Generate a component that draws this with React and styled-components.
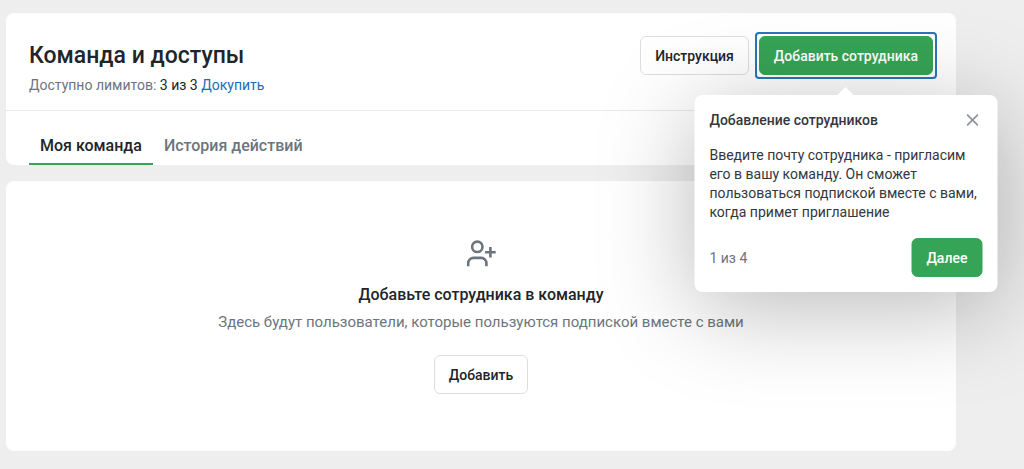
import React from "react";
import styled, { createGlobalStyle } from "styled-components";

export default function App() {
  return (
    <>
      <GlobalStyle />
      <Page>
        <Card as="header">
          <Header>
            <div>
              <Title>Команда и доступы</Title>
              <Limits>
                Доступно лимитов: <span>3 из 3</span> <a href="#buy">Докупить</a>
              </Limits>
            </div>
            <Actions>
              <Button type="button">Инструкция</Button>
              <Anchor>
                <Button type="button" $primary $focused>
                  Добавить сотрудника
                </Button>
                <Popover />
              </Anchor>
            </Actions>
          </Header>
          <Tabs>
            <Tab href="#team" $active>
              Моя команда
            </Tab>
            <Tab href="#history">История действий</Tab>
          </Tabs>
        </Card>

        <Card as="main">
          <Empty>
            <UserPlusIcon />
            <h2>Добавьте сотрудника в команду</h2>
            <p>Здесь будут пользователи, которые пользуются подпиской вместе с вами</p>
            <Button type="button">Добавить</Button>
          </Empty>
        </Card>
      </Page>
    </>
  );
}

const Popover = () => (
  <PopoverBox role="dialog" aria-labelledby="popover-title">
    <PopoverHead>
      <h3 id="popover-title">Добавление сотрудников</h3>
      <Close type="button" aria-label="Закрыть">
        <svg width="12" height="12" viewBox="0 0 12 12" aria-hidden="true">
          <path d="M.6.6l10.8 10.8M11.4.6L.6 11.4" stroke="currentColor" strokeWidth="1.7" />
        </svg>
      </Close>
    </PopoverHead>
    <PopoverText>
      Введите почту сотрудника - пригласим его в вашу команду. Он сможет
      пользоваться подпиской вместе с вами, когда примет приглашение
    </PopoverText>
    <PopoverFoot>
      <span>1 из 4</span>
      <Button type="button" $primary>
        Далее
      </Button>
    </PopoverFoot>
  </PopoverBox>
);

const UserPlusIcon = () => (
  <svg
    width="30"
    height="28"
    viewBox="0 0 30 28"
    fill="none"
    stroke="#6c757d"
    strokeWidth="2.6"
    aria-hidden="true"
  >
    <circle cx="11.3" cy="7.8" r="5.2" />
    <path d="M2.2 27.2v-3a5.3 5.3 0 0 1 5.3-5.3h7.6a5.3 5.3 0 0 1 5.3 5.3v3" />
    <path d="M24.4 8v10.6M19.1 13.3h10.6" />
  </svg>
);

const GlobalStyle = createGlobalStyle`
  * {
    box-sizing: border-box;
  }

  body {
    margin: 0;
    background: #eee;
    color: #212529;
    font-family: Roboto, "Liberation Sans", sans-serif;
    font-size: 14px;
    line-height: 20px;
  }

  h1, h2, h3, p {
    margin: 0;
    font-weight: 500;
  }

  a {
    text-decoration: none;
  }
`;

const Page = styled.div`
  display: flex;
  flex-direction: column;
  gap: 16px;
  padding: 13px 68px 17px 6px;
`;

const Card = styled.section`
  background: #fff;
  border-radius: 8px;
`;

const Header = styled.div`
  display: flex;
  justify-content: space-between;
  align-items: flex-start;
  padding: 23px 23px 15px;
  border-bottom: 1px solid #e9e9ea;
`;

const Title = styled.h1`
  padding-top: 4px;
  font-size: 23px;
  line-height: 32px;
`;

const Limits = styled.p`
  padding-top: 3px;
  font-weight: 400;
  color: #6c757d;
  line-height: 20px;

  span {
    color: #212529;
  }

  a {
    color: #1c6bb8;
  }
`;

const Actions = styled.div`
  display: flex;
  gap: 10px;
`;

const Anchor = styled.div`
  position: relative;
`;

const Button = styled.button`
  position: relative;
  height: 39px;
  padding: 0 14px;
  border: 1px solid ${({ $primary }) => ($primary ? "#36a456" : "#dcdee0")};
  border-radius: 6px;
  background: ${({ $primary }) => ($primary ? "#36a456" : "#fff")};
  color: ${({ $primary }) => ($primary ? "#fff" : "#212529")};
  font: 500 14px/20px Roboto, "Liberation Sans", sans-serif;
  white-space: nowrap;
  cursor: pointer;

  /* focus ring */
  &::after {
    content: "";
    display: ${({ $focused }) => ($focused ? "block" : "none")};
    position: absolute;
    inset: -5px;
    border: 2px solid #2a74bd;
    border-radius: 4px;
  }
`;

const Tabs = styled.nav`
  display: flex;
  padding: 25px 23px 0;
`;

const Tab = styled.a`
  padding: 0 11px 7px;
  border-bottom: 2px solid ${({ $active }) => ($active ? "#36a456" : "transparent")};
  color: ${({ $active }) => ($active ? "#212529" : "#6c757d")};
  font-size: 16px;
  font-weight: 500;
`;

const Empty = styled.div`
  display: flex;
  flex-direction: column;
  align-items: center;
  padding: 58px 24px 57px;
  text-align: center;

  h2 {
    padding-top: 18px;
    font-size: 16px;
    line-height: 20px;
  }

  p {
    padding: 7px 0 23px;
    color: #6c757d;
    font-size: 15px;
    font-weight: 400;
    line-height: 20px;
  }
`;

const PopoverBox = styled.div`
  position: absolute;
  top: calc(100% + 20px);
  left: 50%;
  transform: translateX(-50%);
  width: 303px;
  padding: 15px;
  border-radius: 8px;
  background: #fff;
  color: #34373b;
  box-shadow: 0 16px 96px rgba(0, 0, 0, 0.28);

  &::before {
    content: "";
    position: absolute;
    bottom: 100%;
    left: 50%;
    margin-left: -8px;
    border: 8px solid transparent;
    border-top: 0;
    border-bottom-color: #fff;
  }
`;

const PopoverHead = styled.div`
  display: flex;
  justify-content: space-between;
  align-items: center;

  h3 {
    font-size: 14px;
  }
`;

const Close = styled.button`
  display: flex;
  padding: 4px;
  border: 0;
  background: none;
  color: #8d949c;
  cursor: pointer;
`;

const PopoverText = styled.p`
  padding: 16px 0;
  font-weight: 400;
  line-height: 19px;
`;

const PopoverFoot = styled.div`
  display: flex;
  justify-content: space-between;
  align-items: center;
  color: #6c757d;
`;
